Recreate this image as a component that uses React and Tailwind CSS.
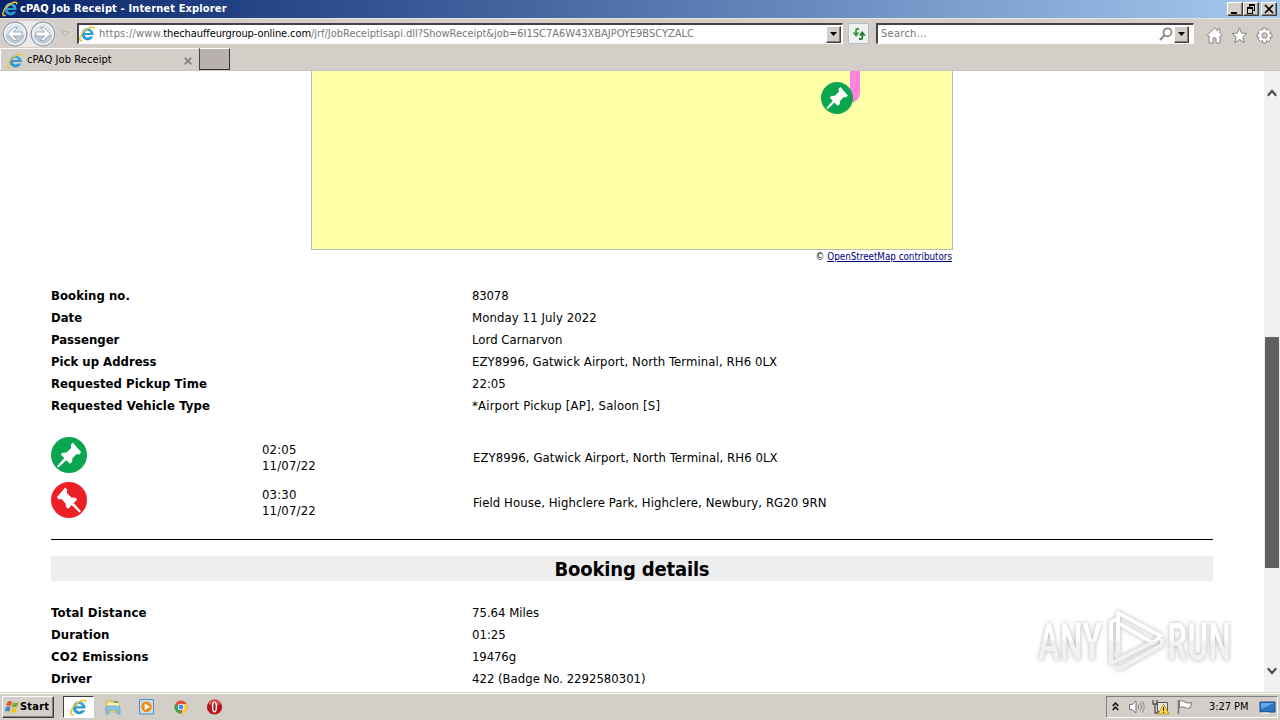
import React from "react";

const UI = "font-['DejaVu_Sans_Condensed','DejaVu_Sans',sans-serif] [font-stretch:condensed]";

function IELogo({ className }) {
  return (
    <svg viewBox="0 0 16 16" className={className}>
      <path d="M14.2 10.6A6 6 0 1 1 14.6 8.9H5.6A3.2 3.2 0 0 0 11 10.6ZM5.7 6.9H11.5A3 3 0 0 0 5.7 6.9Z" fill="#2b9bd8" fillRule="evenodd" />
      <path d="M3.4 5.4A5.4 5.4 0 0 1 13.4 6" fill="none" stroke="#6fcdf2" strokeWidth=".9" />
      <path d="M3.6 14.3C-.8 16 .2 9.6 5.2 5.2C9.6 1.2 15.8-.6 14.6 3.4" fill="none" stroke="#ecc22f" strokeWidth="1.5" />
    </svg>
  );
}

function Pin({ className, color, flip = false }) {
  return (
    <svg viewBox="0 0 36 36" className={className}>
      <circle cx="18" cy="18" r="18" fill={color} />
      <g transform={flip ? "translate(36 0) scale(-1 1)" : undefined} fill="#fff">
        <path d="M21.8 5.6L30.2 15.2L28.2 17.4L25.6 17L21.4 21.5L21.1 25.1L18.8 26.8L9.8 17.6L11.6 15.7L15.5 15.6L20.2 11.1L19.8 7.8Z" />
        <path d="M14 20.3L16.2 22.3L7.6 30.4L6 29.2Z" />
      </g>
    </svg>
  );
}

function WinButton({ children, className = "" }) {
  return (
    <div className={`flex h-[14px] w-4 items-center justify-center border border-t-white border-l-white border-r-[#404040] border-b-[#404040] bg-[#d4d0c8] shadow-[inset_-1px_-1px_0_#808080] ${className}`}>
      <svg viewBox="0 0 12 12" className="h-3 w-3">{children}</svg>
    </div>
  );
}

function DropArrow() {
  return (
    <div className="flex h-[17px] w-[15px] items-center justify-center border border-t-white border-l-white border-r-[#404040] border-b-[#404040] bg-[#d4cec8] shadow-[inset_-1px_-1px_0_#808080]">
      <svg viewBox="0 0 7 4" className="h-1 w-[7px]"><path d="M0 0H7L3.5 4Z" /></svg>
    </div>
  );
}

function NavArrow({ flip = false }) {
  return (
    <svg viewBox="0 0 26 26" className="h-[26px] w-[26px]">
      <circle cx="13" cy="13" r="11.8" fill="#dfe4ea" stroke="#8996a3" strokeWidth="1.2" />
      <path d="M2.5 14A10.5 10.5 0 0 0 23.5 14Z" fill="#bccad6" />
      <circle cx="13" cy="13" r="10.3" fill="none" stroke="#f4f7fa" strokeWidth="1.2" />
      <path transform={flip ? "translate(26 0) scale(-1 1)" : undefined} d="M5.5 13L12.5 6.4H15.8L11.3 11H20V15H11.3L15.8 19.6H12.5Z" fill="#fff" stroke="#98a4b1" strokeWidth=".9" />
    </svg>
  );
}

function TitleBar() {
  return (
    <div className="flex h-[18px] shrink-0 items-center bg-linear-to-r from-[#0a246a] to-[#a6caf0] pr-[3px] pl-[2px]">
      <IELogo className="h-4 w-4" />
      <span className="ml-[2px] text-[11px] leading-[18px] font-bold tracking-[0.14px] whitespace-nowrap text-white">cPAQ Job Receipt - Internet Explorer</span>
      <div className="ml-auto flex">
        <WinButton><path d="M2 9H8V11H2Z" /></WinButton>
        <WinButton>
          <path d="M4 1H10V8H8V7H9V3H5V4H4ZM2 4H8V11H2ZM3 6V10H7V6Z" fillRule="evenodd" />
        </WinButton>
        <WinButton className="ml-[2px]"><path d="M2 2L10 10M10 2L2 10" stroke="#000" strokeWidth="1.7" /></WinButton>
      </div>
    </div>
  );
}

function NavBar() {
  return (
    <div className="flex h-[30px] shrink-0 items-center border-t border-[#e6e2dc] pl-[2px]">
      <div className="flex h-[26px] w-[54px] items-center gap-[2px] rounded-full bg-[#eceae8]">
        <NavArrow />
        <NavArrow flip />
      </div>
      <svg viewBox="0 0 9 6" className="ml-[5px] h-[6px] w-[9px]"><path d="M.8.8H8.2L4.5 5Z" fill="#ddd9d5" stroke="#aaa59f" strokeWidth=".8" /></svg>
      <div className="ml-[7px] flex h-[21px] w-[766px] items-center border-t-2 border-r border-b border-l-2 border-t-[#484048] border-r-white border-b-white border-l-[#484048] bg-white">
        <IELogo className="h-4 w-4" />
        <span className="ml-[4px] text-[11px] leading-4 whitespace-nowrap text-[#777]">
          <span className="tracking-[0.2px]">https://www.</span><span className="tracking-[-0.1px] text-black">thechauffeurgroup-online.com</span><span className="tracking-[-0.02px]">/jrf/JobReceiptIsapi.dll?ShowReceipt&amp;job=6I1SC7A6W43XBAJPOYE9BSCYZALC</span>
        </span>
        <div className="mr-px ml-auto"><DropArrow /></div>
      </div>
      <div className="ml-[5px] flex h-[21px] w-[21px] items-center justify-center border border-[#b8bfc9] bg-[#eef1ef]">
        <svg viewBox="0 0 16 14" className="h-[14px] w-4">
          <path d="M8 2H6Q5 2 5 4V6" fill="none" stroke="#3b983c" strokeWidth="1.8" />
          <path d="M1.5 5.5H8.5L5 10Z" fill="#3b983c" />
          <path d="M8 12H10Q11.3 12 11.3 10V8" fill="none" stroke="#237d27" strokeWidth="1.8" />
          <path d="M7.8 8.5H14.8L11.3 4Z" fill="#237d27" />
        </svg>
      </div>
      <div className="ml-[7px] flex h-[21px] w-[318px] items-center border-t-2 border-r border-b border-l-2 border-t-[#484048] border-r-white border-b-white border-l-[#484048] bg-white pr-[4px] pl-[3px]">
        <span className="text-[11px] tracking-[0.28px] text-[#777]">Search...</span>
        <svg viewBox="0 0 14 14" className="mr-[1px] ml-auto h-[14px] w-[14px]">
          <circle cx="8.5" cy="5.3" r="4" fill="none" stroke="#858585" strokeWidth="1.7" />
          <path d="M5.5 8.4L1 13" stroke="#858585" strokeWidth="2" />
        </svg>
        <DropArrow />
      </div>
      <div className="mt-[3px] ml-[12px] flex items-center gap-[8px]">
        <svg viewBox="0 0 17 17" className="h-[17px] w-[17px]">
          <path d="M1 8.3L8.5 1L11.5 3.8V2H14V6.3L16 8.3L15 9.6L14 8.8V16H10V11H7V16H3V8.8L2 9.6Z" fill="#fff" stroke="#858585" />
        </svg>
        <svg viewBox="0 0 17 17" className="h-[17px] w-[17px]">
          <path d="M8.5 1L10.6 6.1L16 6.5L11.9 10L13.2 15.6L8.5 12.6L3.8 15.6L5.1 10L1 6.5L6.4 6.1Z" fill="#fff" stroke="#858585" />
        </svg>
        <svg viewBox="0 0 17 17" className="h-[17px] w-[17px]">
          <path d="M7 1H10L10.5 3L12.4 2.4L14.6 4.6L13.6 6.5L16 7V10L14 10.5L14.6 12.4L12.4 14.6L10.5 13.6L10 16H7L6.5 13.6L4.6 14.6L2.4 12.4L3 10.5L1 10V7L3 6.5L2.4 4.6L4.6 2.4L6.5 3Z" fill="#fff" stroke="#858585" />
          <circle cx="8.5" cy="8.5" r="2.7" fill="#d4cec8" stroke="#858585" />
        </svg>
      </div>
    </div>
  );
}

function TabBar() {
  return (
    <div className="flex h-[23px] shrink-0 items-start border-b border-[#c9c4be]">
      <div className="flex h-[22px] w-[198px] items-center border-t border-l border-white pt-[2px] pr-[6px] pl-[6px]">
        <IELogo className="h-4 w-4" />
        <span className="ml-[4px] text-[11px] tracking-[0.08px]">cPAQ Job Receipt</span>
        <svg viewBox="0 0 8 8" className="ml-auto h-2 w-2"><path d="M.7.7L7.3 7.3M7.3.7L.7 7.3" stroke="#857f7d" strokeWidth="1.7" /></svg>
      </div>
      <div className="ml-px h-[22px] w-[31px] border border-t-white border-r-[#303030] border-b-[#303030] border-l-[#404040] bg-[#b9b1ad]" />
    </div>
  );
}

function Row({ label, value, lc = "", vc = "" }) {
  return (
    <div className="flex h-[22px] items-center">
      <div className={`w-[421px] font-bold whitespace-nowrap ${lc}`}>{label}</div>
      <div className={`whitespace-nowrap ${vc}`}>{value}</div>
    </div>
  );
}

function Stop({ color, flip, time, place }) {
  return (
    <div className="flex h-[45px] items-center">
      <Pin className="mb-[5px] h-9 w-9" color={color} flip={flip} />
      <div className="ml-[175px] w-[211px] leading-4 tracking-[0.17px]">
        {time}<br />11/07/22
      </div>
      <div className="tracking-[0.08px] whitespace-nowrap">{place}</div>
    </div>
  );
}

function Watermark() {
  return (
    <svg viewBox="0 0 200 64" className="absolute top-[538px] left-[1036px] h-16 w-[200px] overflow-visible drop-shadow-[0_0_2px_rgba(0,0,0,0.3)]">
      <defs>
        <linearGradient id="wm" gradientUnits="userSpaceOnUse" x1="0" y1="0" x2="0" y2="64">
          <stop offset="0.48" stopColor="#fff" />
          <stop offset="0.52" stopColor="#f1f1f1" />
        </linearGradient>
      </defs>
      <g fill="url(#wm)" className="font-[Roboto,sans-serif] font-medium">
        <text x="2" y="51" fontSize="51" textLength="64" lengthAdjust="spacingAndGlyphs">ANY</text>
        <text x="131" y="51" fontSize="51" textLength="64" lengthAdjust="spacingAndGlyphs">RUN</text>
      </g>
      <g fill="none" stroke="url(#wm)" strokeWidth="4" strokeLinejoin="round">
        <path d="M82 44V4L125 27L117 34L84 15" />
        <path d="M81 10L75 13V54L80 52L117 33" />
        <path d="M80 59H85L126 36V30" />
      </g>
    </svg>
  );
}

function Page() {
  return (
    <div className="flex min-w-0 flex-1 flex-col overflow-hidden bg-white pl-[51px] text-[13px] leading-[22px] text-black">
      <div className="ml-[260px] w-[642px] shrink-0">
        <div className="relative h-[179px] border border-t-0 border-[#bbb] bg-[#ffffa8]">
          <div className="absolute top-0 left-[538px] h-[32px] w-[10px] rounded-br-full bg-[#ff82dc]" />
          <Pin className="absolute top-[11px] left-[509px] h-8 w-8" color="#0aa64f" />
        </div>
        <div className="flex h-[14px] items-center justify-end gap-[3px] pr-px text-[9.75px] leading-[14px]">
          <span>©</span>
          <span className="text-[#000080] underline">OpenStreetMap contributors</span>
        </div>
      </div>
      <div className="mt-[21px] shrink-0">
        <Row label="Booking no." value="83078" lc="tracking-[0.05px]" vc="tracking-[-0.15px]" />
        <Row label="Date" value="Monday 11 July 2022" vc="tracking-[0.1px]" />
        <Row label="Passenger" value="Lord Carnarvon" vc="tracking-[0.04px]" />
        <Row label="Pick up Address" value="EZY8996, Gatwick Airport, North Terminal, RH6 0LX" vc="tracking-[0.09px]" />
        <Row label="Requested Pickup Time" value="22:05" lc="tracking-[0.06px]" />
        <Row label="Requested Vehicle Type" value="*Airport Pickup [AP], Saloon [S]" lc="tracking-[0.12px]" vc="tracking-[0.18px]" />
      </div>
      <div className="mt-[18px] shrink-0">
        <Stop color="#0aa64f" time="02:05" place="EZY8996, Gatwick Airport, North Terminal, RH6 0LX" />
        <Stop color="#ec2027" flip time="03:30" place="Field House, Highclere Park, Highclere, Newbury, RG20 9RN" />
      </div>
      <div className="mt-[14px] mr-[51px] shrink-0 border-t border-black" />
      <div className="mt-[16px] mr-[51px] h-[25px] shrink-0 bg-[#eee] pt-px text-center text-[20px] leading-[25px] font-bold tracking-[-0.17px]">Booking details</div>
      <div className="mt-[21px] shrink-0">
        <Row label="Total Distance" value="75.64 Miles" lc="tracking-[0.17px]" />
        <Row label="Duration" value="01:25" lc="tracking-[0.1px]" />
        <Row label="CO2 Emissions" value="19476g" lc="tracking-[0.1px]" vc="tracking-[-0.1px]" />
        <Row label="Driver" value="422 (Badge No. 2292580301)" />
      </div>
    </div>
  );
}

function ScrollBar() {
  return (
    <div className="flex w-4 shrink-0 flex-col items-center bg-[#f0f0f0] pt-[18px] pb-[17px]">
      <svg viewBox="0 0 10 8" className="h-2 w-[10px] shrink-0"><path d="M.8 6.7L5 2L9.2 6.7" fill="none" stroke="#505050" strokeWidth="2.2" /></svg>
      <div className="mt-[240px] h-[231px] w-[14px] bg-[#606060]" />
      <svg viewBox="0 0 10 8" className="mt-auto h-2 w-[10px] shrink-0"><path d="M.8 1.3L5 6L9.2 1.3" fill="none" stroke="#505050" strokeWidth="2.2" /></svg>
    </div>
  );
}

function Taskbar() {
  return (
    <div className="flex h-[28px] shrink-0 items-end border-t border-[#d4d0c8] bg-[#d4cec8] pb-[2px] shadow-[inset_0_1px_0_#fff]">
      <div className="ml-[2px] flex h-[22px] w-[52px] items-center border border-t-white border-l-white border-r-[#404040] border-b-[#404040] pl-[1px] shadow-[inset_-1px_-1px_0_#808080]">
        <svg viewBox="0 0 16 16" className="h-4 w-4">
          <path d="M3.5 3Q5.5 1.2 8 3L6.7 7.3Q4.4 5.8 2.2 7.3Z" fill="#e65a26" />
          <path d="M9 3.3Q11.6 4.8 14.7 3L13.3 7.3Q10.8 9 7.7 7.6Z" fill="#73af37" />
          <path d="M2 8.3Q4.3 6.9 6.4 8.3L5.2 12.8Q3 11.3.7 12.7Z" fill="#3d83cd" />
          <path d="M7.4 8.7Q10.3 10 13 8.5L11.7 13Q9 14.7 6.1 13.1Z" fill="#f0c32f" />
        </svg>
        <span className="text-[11px] font-bold tracking-[0.2px]">Start</span>
      </div>
      <div className="ml-[9px] flex h-[22px] w-[31px] items-center justify-center border border-t-[#404040] border-l-[#404040] border-r-white border-b-white bg-white"><IELogo className="h-[17px] w-[17px]" /></div>
      <svg viewBox="0 0 18 18" className="mb-[2px] ml-[10px] h-[18px] w-[18px]">
        <path d="M2 2.5H8L9 4H15V14H2Z" fill="#ecd783" stroke="#c9ac4b" strokeWidth=".7" />
        <path d="M4 5H15V10H4Z" fill="#f8efb5" /><path d="M10 3H14V5H10Z" fill="#57ad60" />
        <path d="M2 16V10Q2 8 4 8H14Q16 8 16 10V16H13V12H5V16Z" fill="#87c6e2" stroke="#599dbc" strokeWidth=".7" />
      </svg>
      <svg viewBox="0 0 18 18" className="mb-[2px] ml-[16px] h-[18px] w-[18px]">
        <path d="M1.5 1.5H15.5V16H1.5Z" fill="#bcdcf2" stroke="#4e91c7" />
        <circle cx="8.5" cy="8.8" r="5.7" fill="#f18a1c" stroke="#fff" strokeWidth=".5" /><path d="M6.7 5.5L12 8.8L6.7 12Z" fill="#fff" />
      </svg>
      <svg viewBox="0 0 18 18" className="mb-[2px] ml-[16px] h-[18px] w-[18px]">
        <circle cx="9" cy="9" r="6.5" fill="#e74a38" />
        <path d="M3.3 6L8.5 9.6L9 15.5A6.5 6.5 0 0 1 3.3 6Z" fill="#31a64e" />
        <path d="M9 6H14.8A6.5 6.5 0 0 1 9 15.5L12 10Z" fill="#f9cf38" />
        <circle cx="9" cy="9" r="3.2" fill="#fff" /><circle cx="9" cy="9" r="2.4" fill="#4a89e9" />
      </svg>
      <svg viewBox="0 0 18 18" className="mb-[2px] ml-[16px] h-[18px] w-[18px]">
        <circle cx="8.5" cy="9" r="7.6" fill="#b81319" /><path d="M2 6A7.2 7.2 0 0 1 15 6Q9 9 2 6" fill="#db5253" />
        <ellipse cx="8.5" cy="9" rx="2.7" ry="5.6" fill="#fff" /><ellipse cx="8.5" cy="9" rx="1.1" ry="4.3" fill="#9c1013" />
      </svg>
      <div className="mr-[2px] ml-auto flex h-[22px] w-[172px] items-center border border-t-[#808080] border-l-[#808080] border-r-white border-b-white pr-px pl-[5px]">
        <svg viewBox="0 0 7 9" className="mb-[2px] h-[9px] w-[7px]"><path d="M.7 4L3.5 1L6.3 4M.7 8L3.5 5L6.3 8" fill="none" stroke="#000" strokeWidth="1.4" /></svg>
        <svg viewBox="0 0 18 16" className="ml-[9px] h-4 w-[18px]">
          <path d="M1.5 5.5H4L8 2V14L4 10.5H1.5Z" fill="#fff" stroke="#777" />
          <path d="M10 5.5Q12 8 10 10.5M12.2 4Q15 8 12.2 12M14.3 2.5Q18 8 14.3 13.5" fill="none" stroke="#888" />
        </svg>
        <svg viewBox="0 0 18 16" className="ml-[6px] h-4 w-[18px]">
          <path d="M5.5 3.5H15.5V12.5H5.5Z" fill="#e6e6e6" stroke="#555" />
          <path d="M1 1V5H5V1M3 5V14H7" fill="none" stroke="#555" strokeWidth="1.3" />
          <path d="M11.5 5L17 15H6Z" fill="#ffd83c" stroke="#a78713" strokeWidth=".7" /><path d="M11 8H12V12H11ZM11 13H12V14H11Z" fill="#222" />
        </svg>
        <svg viewBox="0 0 18 16" className="ml-[6px] h-4 w-[18px]">
          <path d="M2.5 1V15" stroke="#777" strokeWidth="1.6" /><path d="M3.5 2Q6 1 9 3Q12 5 16 3.5L14 9Q11 10 9 8.5Q6 7 3.5 8.5Z" fill="#fff" stroke="#777" />
        </svg>
        <span className="ml-[15px] text-[11px] tracking-[-0.05px] whitespace-nowrap">3:27 PM</span>
        <svg viewBox="0 0 17 15" className="ml-auto h-[15px] w-[17px]">
          <path d="M1 2H16V12H1Z" fill="#2e76c4" stroke="#174a89" /><path d="M2 3H15L2 9Z" fill="#65a8e1" /><path d="M2 13H10" stroke="#fff" />
        </svg>
      </div>
    </div>
  );
}

export default function App() {
  return (
    <div className={`flex h-[720px] w-[1280px] flex-col overflow-hidden bg-[#d4cec8] text-black ${UI}`}>
      <TitleBar />
      <NavBar />
      <TabBar />
      <div className="relative flex min-h-0 flex-1">
        <Page />
        <ScrollBar />
        <Watermark />
      </div>
      <Taskbar />
    </div>
  );
}
